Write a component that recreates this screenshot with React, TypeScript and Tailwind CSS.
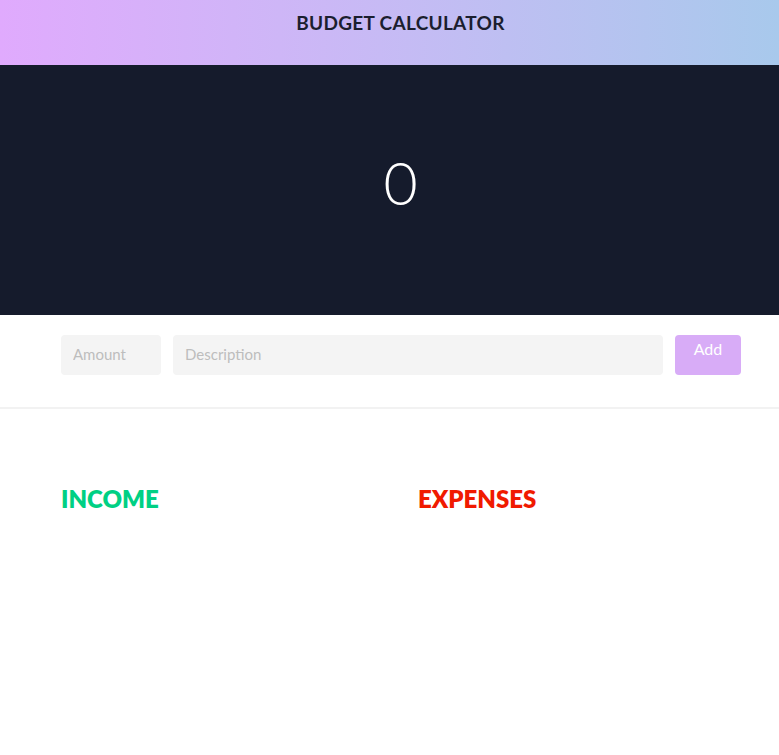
import React from 'react';

const App: React.FC = () => {
  return (
    <div className="min-h-screen bg-white" style={{ fontFamily: 'Lato, "Noto Sans", sans-serif' }}>
      {/* Header */}
      <header className="h-[65px] bg-gradient-to-r from-[#e0aafd] to-[#a8c9ec] pl-[22px] pt-[9px] text-center">
        <h1 className="text-[19px] font-bold tracking-[0.3px] text-[#1b1e2f]">BUDGET CALCULATOR</h1>
      </header>

      {/* Balance */}
      <section className="flex h-[250px] items-center justify-center bg-[#151b2c] pb-[16px] pl-[22px]">
        <span className="text-[59px] leading-none text-white" style={{ fontWeight: 300 }}>0</span>
      </section>

      {/* Form */}
      <div className="border-b-2 border-[#f2f2f2] pb-[32px] pt-[20px]">
        <form className="ml-[61px] flex w-[680px] gap-3" onSubmit={(e) => e.preventDefault()}>
          <input
            type="number"
            placeholder="Amount"
            className="h-[40px] w-[100px] rounded bg-[#f4f4f4] px-3 pb-[2px] text-[15px] text-gray-700 outline-none placeholder:text-[#bdbdbd]"
          />
          <input
            type="text"
            placeholder="Description"
            className="h-[40px] flex-1 rounded bg-[#f4f4f4] px-3 pb-[2px] text-[15px] text-gray-700 outline-none placeholder:text-[#bdbdbd]"
          />
          <button
            type="submit"
            className="h-[40px] w-[66px] rounded bg-[#d8acf7] pb-[13px] text-[16px] text-white"
          >
            Add
          </button>
        </form>
      </div>

      {/* Lists */}
      <div className="ml-[61px] mt-[72px] grid w-[714px] grid-cols-2">
        <div>
          <h2 className="text-[24px] font-extrabold text-[#00d084]">INCOME</h2>
        </div>
        <div>
          <h2 className="text-[24px] font-extrabold text-[#f01a00]">EXPENSES</h2>
        </div>
      </div>
    </div>
  );
};

export default App;
